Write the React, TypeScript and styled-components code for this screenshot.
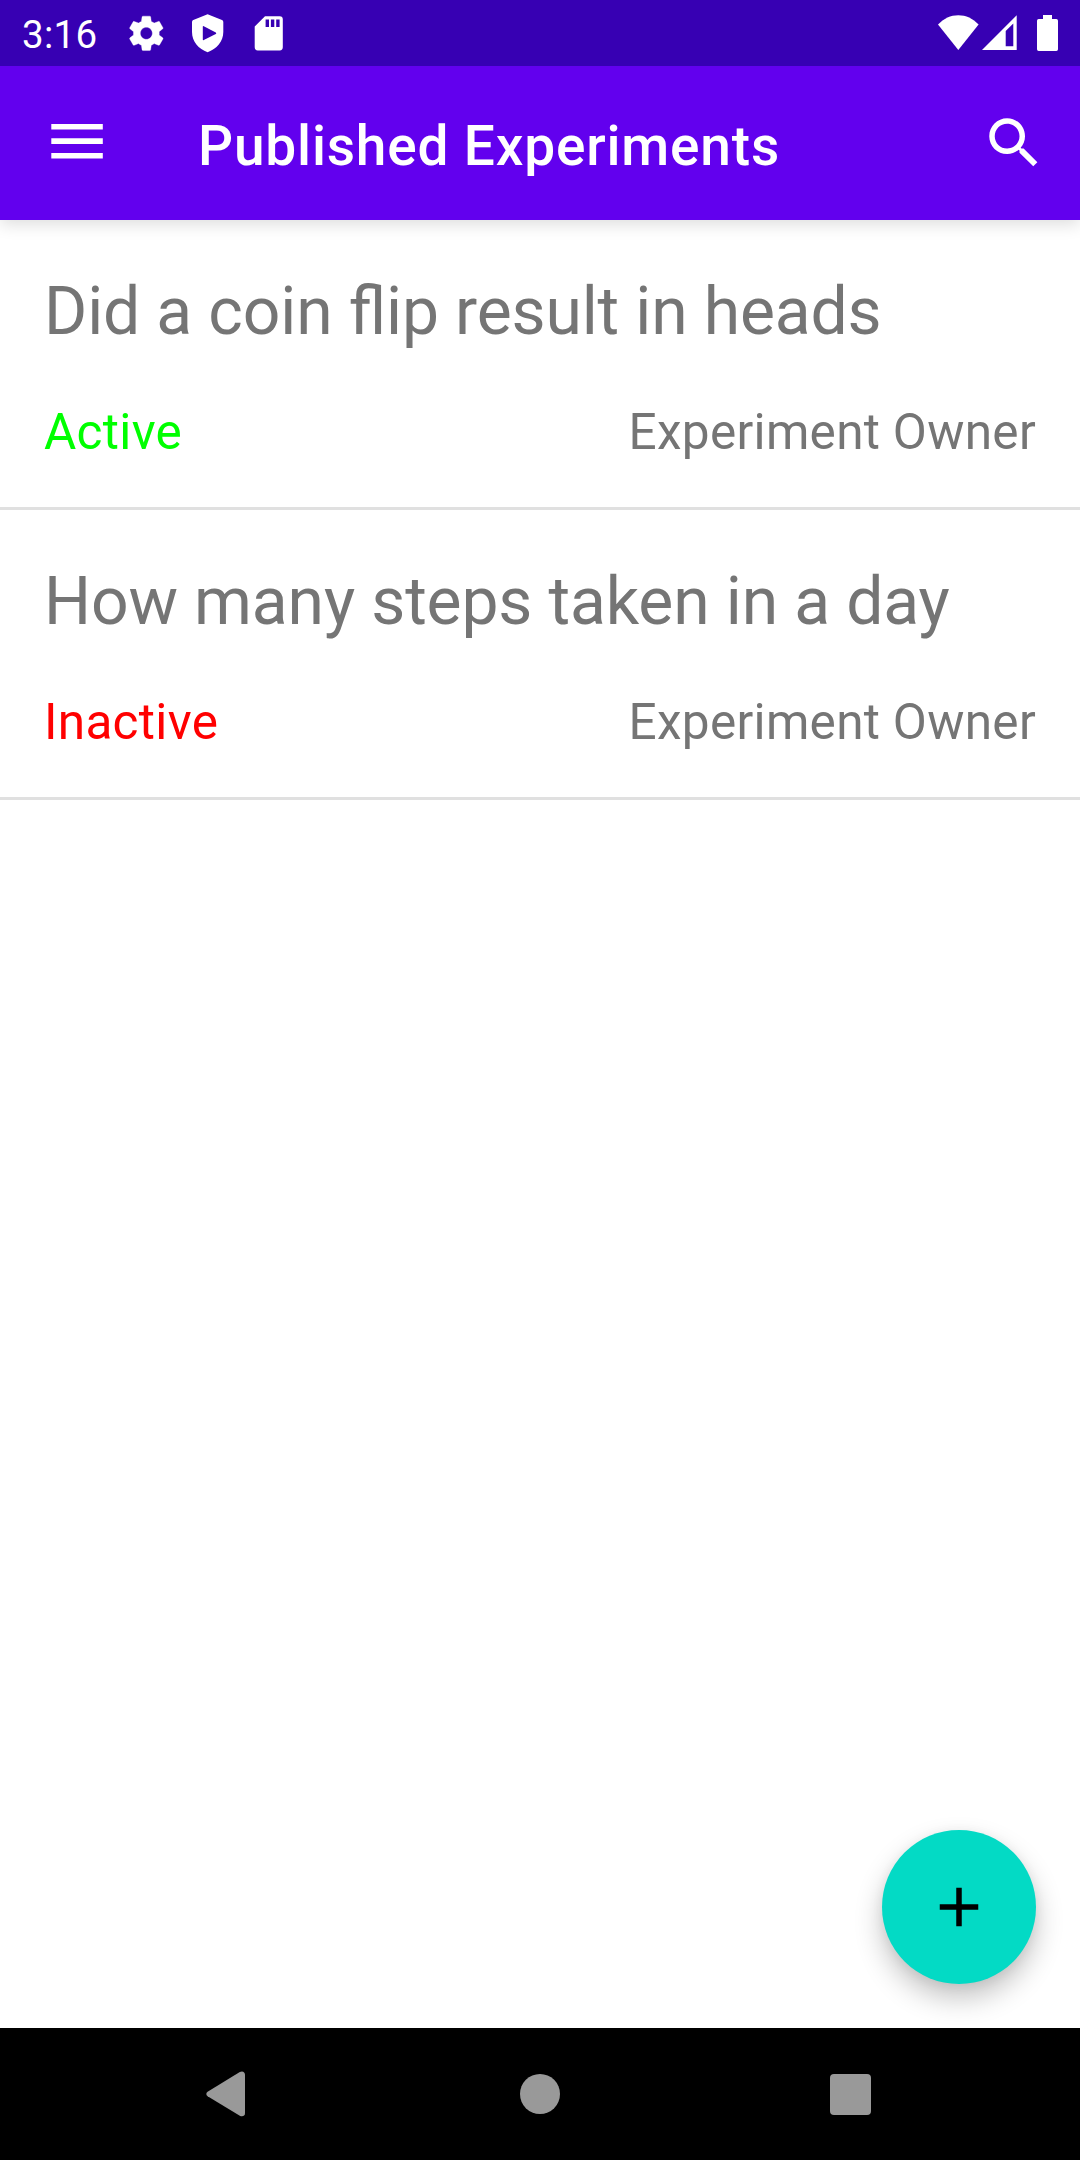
import React from 'react';
import styled, { createGlobalStyle } from 'styled-components';

const GlobalStyle = createGlobalStyle`
  * { box-sizing: border-box; }
  body { margin: 0; background: #fff; }
`;

const Screen = styled.div`
  position: relative;
  display: flex;
  flex-direction: column;
  width: 1080px;
  height: 2160px;
  overflow: hidden;
  background: #fff;
  font-family: Roboto, 'Noto Sans', sans-serif;
`;

const StatusBar = styled.div`
  position: relative;
  z-index: 2;
  display: flex;
  align-items: center;
  justify-content: space-between;
  flex: none;
  height: 66px;
  padding: 0 22px;
  background: #3700b3;
  color: #fff;
`;

const StatusGroup = styled.div<{ $gap?: number }>`
  display: flex;
  align-items: center;
  gap: ${({ $gap = 0 }) => $gap}px;
`;

const Clock = styled.span`
  width: 84.5px;
  font-size: 38.5px;
  line-height: 45px;
  letter-spacing: 0.3px;
  padding-top: 3px;
`;

const Icon = styled.svg`
  display: block;
  flex: none;
  overflow: visible;
`;

const AppBar = styled.header`
  position: relative;
  z-index: 1;
  display: flex;
  align-items: center;
  flex: none;
  height: 154px;
  padding: 0 33px 0 44px;
  background: #6200ee;
  color: #fff;
  box-shadow: 0 4px 16px rgba(0, 0, 0, 0.14);
`;

const IconButton = styled.button`
  display: flex;
  flex: none;
  width: 66px;
  height: 66px;
  padding: 0;
  border: 0;
  background: none;
  color: inherit;
`;

const Title = styled.h1`
  flex: 1;
  margin: 0;
  padding: 6px 0 0 88px;
  font-size: 55px;
  font-weight: 500;
  line-height: 64px;
  letter-spacing: 0.82px;
  white-space: nowrap;
`;

const List = styled.ul`
  flex: 1;
  margin: 0;
  padding: 0;
  list-style: none;
`;

const Item = styled.li`
  height: 290px;
  padding: 53px 44px 0;
  border-bottom: 3px solid #e0e0e0;
  color: #757575;
`;

const Question = styled.div`
  font-size: 66px;
  line-height: 78px;
  letter-spacing: -0.145px;
  font-feature-settings: 'liga' 1;
  white-space: nowrap;
`;

const Meta = styled.div`
  display: flex;
  justify-content: space-between;
  margin-top: 52px;
  font-size: 49.5px;
  line-height: 58px;
  letter-spacing: 0.3px;
`;

const Status = styled.span<{ $active: boolean }>`
  color: ${({ $active }) => ($active ? '#00ff00' : '#ff0000')};
`;

const Fab = styled.button`
  position: absolute;
  right: 44px;
  bottom: 176px;
  display: flex;
  align-items: center;
  justify-content: center;
  width: 154px;
  height: 154px;
  padding: 0;
  border: 0;
  border-radius: 50%;
  background: #03dac5;
  color: #000;
  box-shadow: 0 14px 28px rgba(0, 0, 0, 0.24), 0 2px 12px rgba(0, 0, 0, 0.06);
`;

const NavBar = styled.nav`
  position: relative;
  display: flex;
  align-items: center;
  justify-content: space-between;
  flex: none;
  height: 132px;
  padding: 0 209px 0 206px;
  background: #000;
  color: #999;
`;

const HomeDot = styled.span`
  width: 40px;
  height: 40px;
  border-radius: 50%;
  background: currentColor;
`;

const RecentsSquare = styled.span`
  width: 41px;
  height: 41px;
  margin-top: 1px;
  border-radius: 4px;
  background: currentColor;
`;

const experiments = [
  { question: 'Did a coin flip result in heads', active: true, owner: 'Experiment Owner' },
  { question: 'How many steps taken in a day', active: false, owner: 'Experiment Owner' },
];

const GearIcon = () => (
  <Icon width="42" height="42" viewBox="0 0 42 42" fill="currentColor">
    <path
      transform="translate(-0.3 0.7) scale(1.72)"
      stroke="currentColor"
      strokeWidth="0.2"
      d="M19.43 12.98c.04-.32.07-.64.07-.98s-.03-.66-.07-.98l2.11-1.65c.19-.15.24-.42.12-.64l-2-3.46c-.12-.22-.39-.3-.61-.22l-2.49 1c-.52-.4-1.08-.73-1.69-.98l-.38-2.65C14.46 2.18 14.25 2 14 2h-4c-.25 0-.46.18-.49.42l-.38 2.65c-.61.25-1.17.59-1.69.98l-2.49-1c-.23-.09-.49 0-.61.22l-2 3.46c-.13.22-.07.49.12.64l2.11 1.65c-.04.32-.07.65-.07.98s.03.66.07.98l-2.11 1.65c-.19.15-.24.42-.12.64l2 3.46c.12.22.39.3.61.22l2.49-1c.52.4 1.08.73 1.69.98l.38 2.65c.03.24.24.42.49.42h4c.25 0 .46-.18.49-.42l.38-2.65c.61-.25 1.17-.59 1.69-.98l2.49 1c.23.09.49 0 .61-.22l2-3.46c.12-.22.07-.49-.12-.64l-2.11-1.65zM12 15.5c-1.93 0-3.5-1.57-3.5-3.5s1.57-3.5 3.5-3.5 3.5 1.57 3.5 3.5-1.57 3.5-3.5 3.5z"
    />
  </Icon>
);

const ShieldIcon = () => (
  <Icon width="42" height="42" viewBox="0 0 42 42" fill="currentColor" fillRule="evenodd">
    <path d="M20.6 2.3 35 8Q36.3 8.5 36.3 10V20C36.3 29.5 29.6 37.2 20.6 40.2C11.6 37.2 5 29.5 5 20V10Q5 8.5 6.3 8ZM15.8 14.8V27.4Q15.8 28.6 16.8 28L28.8 22Q29.8 21.3 28.8 20.6L16.8 14.2Q15.8 13.7 15.8 14.8Z" />
  </Icon>
);

const SdCardIcon = () => (
  <Icon width="42" height="42" viewBox="0 0 42 42" fill="currentColor" fillRule="evenodd">
    <path d="M17 4.2H31.7Q34.8 4.2 34.8 7.3V35.3Q34.8 38.4 31.7 38.4H9.8Q6.7 38.4 6.7 35.3V14.5ZM17.6 7.6V15H21V7.6ZM22.9 7.6V15H26.3V7.6ZM28.2 7.6V15H31.6V7.6Z" />
  </Icon>
);

const WifiIcon = () => (
  <Icon width="42" height="36" viewBox="0 0 42 36" fill="currentColor">
    <path d="M1 9.5C6.8 3.4 13.6 0.2 21.3 0.2S35.8 3.4 41.6 9.5L21.3 34.9Z" />
  </Icon>
);

const SignalIcon = () => (
  <Icon width="35" height="36" viewBox="0 0 35 36" fill="currentColor" fillRule="evenodd">
    <path d="M0 35H34.7V0.2ZM23.7 16 31.3 8.6V31.2H23.7Z" />
  </Icon>
);

const BatteryIcon = () => (
  <Icon width="21" height="36" viewBox="0 0 21 36" fill="currentColor">
    <path d="M6 0H15V4H19.3Q21 4 21 5.7V34.3Q21 36 19.3 36H1.7Q0 36 0 34.3V5.7Q0 4 1.7 4H6Z" />
  </Icon>
);

const MenuIcon = () => (
  <Icon width="66" height="66" viewBox="0 0 66 66" fill="currentColor">
    <path d="M7.3 14h51.5v5.6H7.3zM7.3 28.3h51.5v5.6H7.3zM7.3 43h51.5v5.6H7.3z" />
  </Icon>
);

const SearchIcon = () => (
  <Icon width="66" height="66" viewBox="0 0 24 24" fill="currentColor">
    <path d="M15.5 14h-.79l-.28-.27C15.41 12.59 16 11.11 16 9.5 16 5.91 13.09 3 9.5 3S3 5.91 3 9.5 5.91 16 9.5 16c1.61 0 3.09-.59 4.23-1.57l.27.28v.79l5 4.99L20.49 19l-4.99-5zm-6 0C7.01 14 5 11.99 5 9.5S7.01 5 9.5 5 14 7.01 14 9.5 11.99 14 9.5 14z" />
  </Icon>
);

const AddIcon = () => (
  <Icon width="66" height="66" viewBox="0 0 24 24" fill="currentColor">
    <path d="M19 13h-6v6h-2v-6H5v-2h6V5h2v6h6v2z" />
  </Icon>
);

const BackIcon = () => (
  <Icon width="44" height="46" viewBox="0 0 44 46" fill="currentColor">
    <path d="M1.6 20.8 33.8 1.1C36.4-.4 39 .9 39 3.8V42C39 44.9 36.4 46.2 33.8 44.7L1.6 25.2C-.1 24.1-.1 21.9 1.6 20.8Z" />
  </Icon>
);

export default function App() {
  return (
    <Screen>
      <GlobalStyle />
      <StatusBar>
        <StatusGroup $gap={19}>
          <Clock>3:16</Clock>
          <GearIcon />
          <ShieldIcon />
          <SdCardIcon />
        </StatusGroup>
        <StatusGroup $gap={20}>
          <StatusGroup $gap={3}>
            <WifiIcon />
            <SignalIcon />
          </StatusGroup>
          <BatteryIcon />
        </StatusGroup>
      </StatusBar>
      <AppBar>
        <IconButton aria-label="Menu">
          <MenuIcon />
        </IconButton>
        <Title>Published Experiments</Title>
        <IconButton aria-label="Search">
          <SearchIcon />
        </IconButton>
      </AppBar>
      <List>
        {experiments.map((e) => (
          <Item key={e.question}>
            <Question>{e.question}</Question>
            <Meta>
              <Status $active={e.active}>{e.active ? 'Active' : 'Inactive'}</Status>
              <span>{e.owner}</span>
            </Meta>
          </Item>
        ))}
      </List>
      <Fab aria-label="Add experiment">
        <AddIcon />
      </Fab>
      <NavBar>
        <BackIcon />
        <HomeDot />
        <RecentsSquare />
      </NavBar>
    </Screen>
  );
}
